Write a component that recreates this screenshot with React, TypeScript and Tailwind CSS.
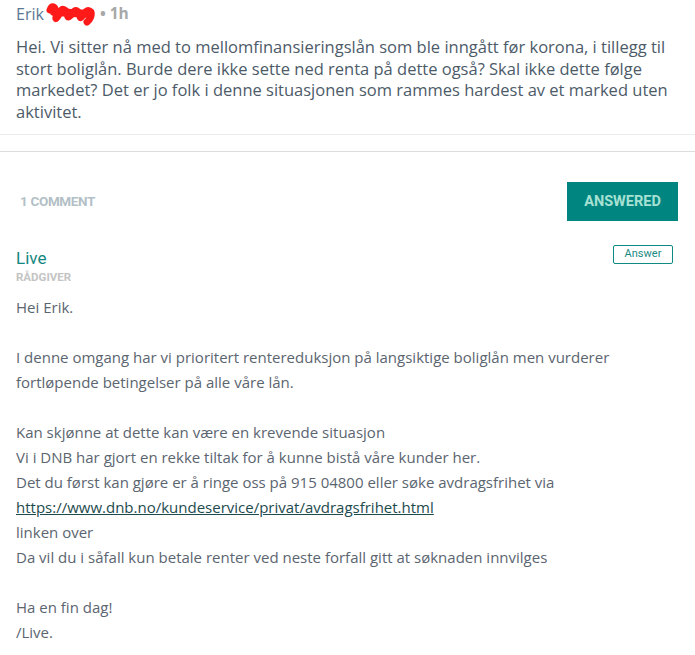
import React from "react";

function Scribble() {
  return (
    <svg width="50" height="24" viewBox="0 0 50 24" className="mx-[2px]">
      <path
        d="M4 8 C6 3, 9 4, 10 10 C11 16, 8 19, 12 14 C15 8, 16 5, 20 9 C23 13, 20 18, 25 13 C29 8, 30 7, 33 11 C35 15, 33 18, 37 13 C40 9, 42 7, 45 10 C46 13, 44 18, 41 20"
        stroke="#ff1a1a"
        strokeWidth="7"
        fill="none"
        strokeLinecap="round"
        strokeLinejoin="round"
      />
      <path d="M8 10 L44 12" stroke="#ff1a1a" strokeWidth="8" strokeLinecap="round" />
    </svg>
  );
}

export default function App() {
  const body = "text-[15px] leading-[25px] text-[#5b6570]";
  return (
    <div className="w-[695px] h-[655px] bg-white overflow-hidden" style={{ fontFamily: "'Open Sans', sans-serif" }}>
      <div className="px-4 pt-[2px]">
        <div className="flex items-center h-[24px]">
          <span className="text-[16px] text-[#5a7894]">Erik</span>
          <Scribble />
          <span className="text-[15.5px] text-[#a8a8a8] font-bold ml-[2px]">• 1h</span>
        </div>
        <p className="mt-[10px] text-[16.5px] leading-[21.5px] text-[#4d5b69] pr-2">
          Hei. Vi sitter nå med to mellomfinansieringslån som ble inngått før korona, i tillegg til stort boliglån. Burde dere ikke sette ned renta på dette også? Skal ikke dette følge markedet? Det er jo folk i denne situasjonen som rammes hardest av et marked uten aktivitet.
        </p>
      </div>
      <div className="mt-[12px] h-px bg-[#ececec]" />
      <div className="mt-[16px] h-px bg-[#dcdcdc]" />
      <div className="flex items-center justify-between pl-5 pr-[17px] mt-[30px]">
        <span className="text-[13.5px] font-bold text-[#b3bfc6] tracking-tight" style={{ fontFamily: "'Roboto', sans-serif" }}>1 COMMENT</span>
        <div className="w-[111px] h-[39px] bg-[#008580] flex items-center justify-center text-[14.5px] font-bold text-[#a6e1d3]" style={{ fontFamily: "'Roboto', sans-serif" }}>
          ANSWERED
        </div>
      </div>
      <div className="px-4 mt-[26px] relative">
        <div className="absolute right-[22px] top-[-2px] w-[60px] h-[19px] border border-[#0e8a82] rounded-[2px] flex items-center justify-center text-[11px] text-[#1b8a82]" style={{ fontFamily: "'Roboto', sans-serif" }}>
          Answer
        </div>
        <div className="text-[17px] leading-[22px] text-[#14877f]" style={{ fontFamily: "'Roboto', sans-serif" }}>Live</div>
        <div className="mt-[1px] text-[11.5px] font-bold text-[#c4c4c4] leading-[14px]" style={{ fontFamily: "'Roboto', sans-serif" }}>RÅDGIVER</div>
        <div className={`${body} mt-[11px]`}>
          <div>Hei Erik.</div>
          <div>&nbsp;</div>
          <div>I denne omgang har vi prioritert rentereduksjon på langsiktige boliglån men vurderer</div>
          <div>fortløpende betingelser på alle våre lån.</div>
          <div>&nbsp;</div>
          <div>Kan skjønne at dette kan være en krevende situasjon</div>
          <div>Vi i DNB har gjort en rekke tiltak for å kunne bistå våre kunder her.</div>
          <div>Det du først kan gjøre er å ringe oss på 915 04800 eller søke avdragsfrihet via</div>
          <div><a className="underline text-[#1d4b4e]">https://www.dnb.no/kundeservice/privat/avdragsfrihet.html</a></div>
          <div>linken over</div>
          <div>Da vil du i såfall kun betale renter ved neste forfall gitt at søknaden innvilges</div>
          <div>&nbsp;</div>
          <div>Ha en fin dag!</div>
          <div>/Live.</div>
        </div>
      </div>
    </div>
  );
}
